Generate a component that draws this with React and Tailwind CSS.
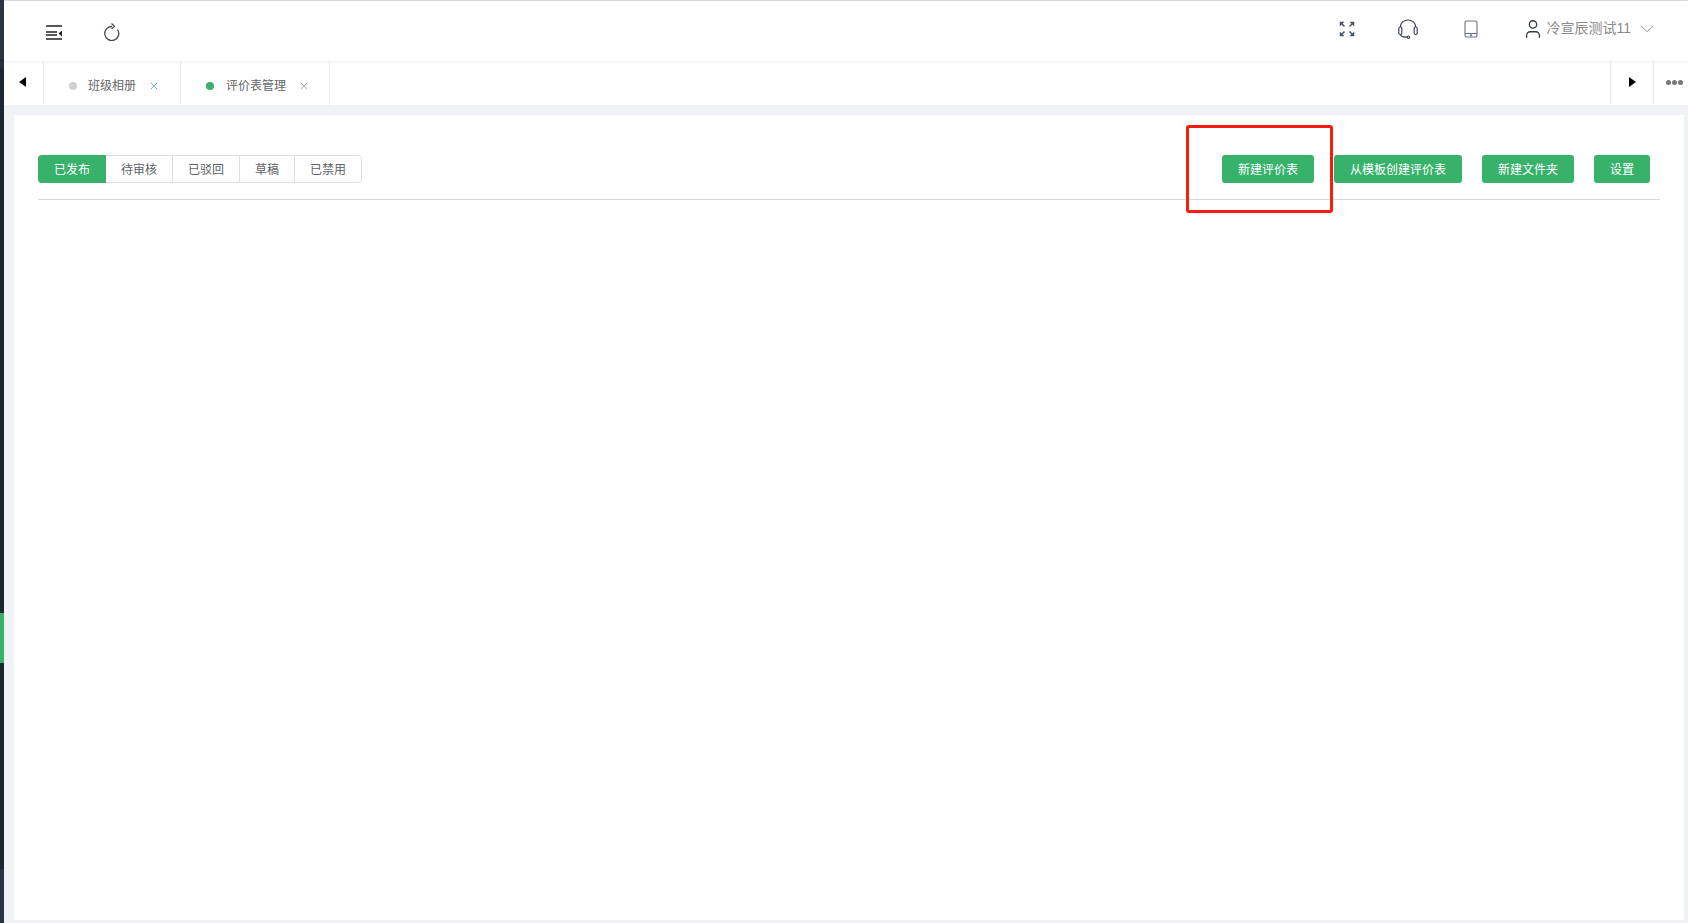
import { ChevronDown, User, X } from 'lucide-react';

const statusTabs = [
  { label: '已发布', width: 'w-[68px] -ml-px', active: true },
  { label: '待审核', width: 'w-[67px]' },
  { label: '已驳回', width: 'w-[67px]' },
  { label: '草稿', width: 'w-[55px]' },
  { label: '已禁用', width: 'w-[66px]' },
];

function MenuFoldIcon() {
  return (
    <svg width="17" height="15" viewBox="0 0 17 15" className="text-[#222]">
      <path d="M0 1h16M0 7h11M0 10h11M0 14h16" stroke="currentColor" strokeWidth="1.6" fill="none" />
      <path d="M12.5 8.5 16 5.5v6z" fill="currentColor" />
    </svg>
  );
}

function RefreshIcon() {
  return (
    <svg width="16" height="18" viewBox="0 0 16 18" fill="none" stroke="#3f4650" strokeWidth="1.3">
      <path d="M13.500 6.500A7 7 0 1 1 8 3.500" />
      <path d="M7.500 0.500 10.500 3.400 7.500 5.800" strokeWidth="1.2" />
    </svg>
  );
}

function ExpandIcon() {
  return (
    <svg width="16" height="16" viewBox="0 0 16 16" fill="none" stroke="#4b5563" strokeWidth="1.5">
      <path d="M1 5V1h4z" fill="#4b5563" strokeWidth="0.5" />
      <path d="M15 5V1h-4z" fill="#4b5563" strokeWidth="0.5" />
      <path d="M1 11v4h4z" fill="#4b5563" strokeWidth="0.5" />
      <path d="M15 11v4h-4z" fill="#4b5563" strokeWidth="0.5" />
      <path d="m2 2 3.5 3.5M14 2l-3.5 3.5M2 14l3.5-3.5M14 14l-3.5-3.5" />
    </svg>
  );
}

function HeadsetIcon() {
  return (
    <svg width="20" height="20" viewBox="0 0 20 20" fill="none" stroke="#3f4650" strokeWidth="1.2">
      <path d="M2.5 8V7.5a7.5 6.5 0 0 1 15 0V8" />
      <rect x="0.8" y="8" width="3" height="7.5" rx="1.4" />
      <rect x="16.2" y="8" width="3" height="7.5" rx="1.4" />
      <path d="M2.5 15.5c.5 2 2.500 2.700 6.500 2.700" />
      <circle cx="10.500" cy="18.200" r="1.200" />
    </svg>
  );
}

function TabletIcon() {
  return (
    <svg width="14" height="18" viewBox="0 0 14 18" fill="none" stroke="#6b7280" strokeWidth="1.1">
      <rect x="1" y="1" width="12" height="16" rx="1.5" />
      <path d="M1 13.500h12" />
      <circle cx="7" cy="15.300" r="0.500" fill="#6b7280" />
    </svg>
  );
}

function PageTab({ label, dotClass, closeClass, textClass, width }) {
  return (
    <div className={`flex h-full items-center border-r border-[#eeeeee] pt-[5px] pl-[25px] ${width}`}>
      <span className={`h-2 w-2 rounded-full ${dotClass}`} />
      <span className={`text-[12px] text-[#666666] ${textClass}`}>{label}</span>
      <X className={`ml-[12px] ${closeClass}`} size={12} strokeWidth={1.4} />
    </div>
  );
}

export default function App() {
  return (
    <div className="relative flex h-[923px] w-[1688px] overflow-hidden bg-[#f0f2f5] font-['Liberation_Sans','Noto_Sans_CJK_SC',sans-serif]">
      {/* collapsed side menu, only a sliver shows */}
      <aside className="flex w-1 shrink-0 flex-col bg-[#1a2630]">
        <div className="h-[59px] bg-[#2a3642]" />
        <div className="h-[10px] bg-[#222e3a]" />
        <div className="h-[544px]" />
        <div className="h-[50px] bg-[#38b26b]" />
        <div className="h-[206px]" />
        <div className="flex-1 bg-[#283440]" />
      </aside>

      <main className="flex min-w-0 flex-1 flex-col">
        <div className="h-px bg-[#dddddd]" />

        <header className="z-10 flex h-[60px] items-center bg-white pr-[30px] shadow-[0_1px_4px_rgba(0,0,0,0.07)]">
          <div className="ml-[42px] mt-[2px] flex items-center">
            <MenuFoldIcon />
            <div className="ml-[41px]"><RefreshIcon /></div>
          </div>
          <div className="ml-auto mb-[5px] flex items-center">
            <ExpandIcon />
            <div className="ml-[43px]"><HeadsetIcon /></div>
            <div className="ml-[46px]"><TabletIcon /></div>
            <User className="ml-[44px] text-[#333a44]" size={22} strokeWidth={1.4} />
            <span className="ml-[2px] text-[14px] text-[#8a8a8a]">冷宣辰测试11</span>
            <ChevronDown className="ml-[5px] text-[#8a8a8a]" size={22} strokeWidth={1} />
          </div>
        </header>

        <nav className="flex h-[44px] items-center bg-white">
          <div className="flex h-full w-[40px] items-center justify-center border-r border-[#eeeeee] pb-[2px] pr-[3px]">
            <span className="h-0 w-0 border-y-[5px] border-r-[7px] border-y-transparent border-r-black" />
          </div>
          <PageTab label="班级相册" dotClass="bg-[#d0d0d0]" closeClass="text-[#4a90c2]" textClass="ml-[11px]" width="w-[137px]" />
          <PageTab label="评价表管理" dotClass="bg-[#38b26b]" closeClass="text-[#888888]" textClass="ml-[12px]" width="w-[149px]" />
          <div className="ml-auto flex h-full w-[44px] items-center justify-center border-x border-[#eeeeee] pb-[2px]">
            <span className="h-0 w-0 border-y-[5px] border-l-[7px] border-y-transparent border-l-black" />
          </div>
          <div className="flex h-full w-[34px] items-center justify-center gap-[1px] pb-[2px] pl-[6px]">
            <span className="h-[5px] w-[5px] rounded-full bg-[#777777]" />
            <span className="h-[5px] w-[5px] rounded-full bg-[#777777]" />
            <span className="h-[5px] w-[5px] rounded-full bg-[#777777]" />
          </div>
        </nav>

        <section className="mb-[3px] ml-[10px] mr-[4px] mt-[10px] flex-1 bg-white px-[24px] pt-[40px]">
          <div className="flex h-[45px] items-start border-b border-[#d9d9d9] pr-[10px]">
            <div className="flex h-[28px] rounded-[4px] border border-[#dcdfe6]">
              {statusTabs.map((tab) => (
                <div
                  key={tab.label}
                  className={`-my-px flex items-center justify-center pt-[2px] text-[12px] ${tab.width} ${tab.active ? 'rounded-l-[4px] bg-[#38b26b] text-white' : 'border-r border-[#dcdfe6] text-[#606266] last:border-r-0'}`}
                >
                  {tab.label}
                </div>
              ))}
            </div>
            <div className="ml-auto flex gap-[20px]">
              <button className="h-[28px] w-[92px] rounded-[3px] bg-[#38b26b] pt-[2px] text-[12px] text-white">新建评价表</button>
              <button className="h-[28px] w-[128px] rounded-[3px] bg-[#38b26b] pt-[2px] text-[12px] text-white">从模板创建评价表</button>
              <button className="h-[28px] w-[92px] rounded-[3px] bg-[#38b26b] pt-[2px] text-[12px] text-white">新建文件夹</button>
              <button className="h-[28px] w-[56px] rounded-[3px] bg-[#38b26b] pt-[2px] text-[12px] text-white">设置</button>
            </div>
          </div>
        </section>
      </main>

      {/* red annotation box drawn over the screenshot */}
      <div className="pointer-events-none absolute left-[1186px] top-[125px] h-[88px] w-[147px] rounded-[3px] border-[3px] border-[#fb1a0e]" />
    </div>
  );
}
